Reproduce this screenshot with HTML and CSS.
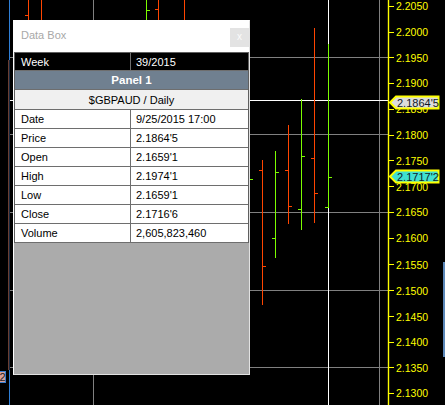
FILE: index.html
```html
<!DOCTYPE html>
<html>
<head>
<meta charset="utf-8">
<link rel="stylesheet" href="styles.css">
</head>
<body>
<div class="screen">
  <svg class="chart" width="445" height="405" viewBox="0 0 445 405">
    <g class="edges">
      <line x1="9.5" y1="0" x2="9.5" y2="60" stroke="#2f7fd6"/>
      <line x1="8.5" y1="60" x2="8.5" y2="370" stroke="#6a3e32"/>
      <line x1="9.5" y1="60" x2="9.5" y2="370" stroke="#1a2a40"/>
      <line x1="9.5" y1="370" x2="9.5" y2="405" stroke="#2f7fd6"/>
      <rect x="-30.5" y="371.5" width="36" height="11" fill="#d8a09a" stroke="#3a7fd0"/>
      <text x="5.5" y="381" class="lefttag" text-anchor="end">2</text>
      <rect x="443" y="262" width="2" height="95" fill="#5b87b8"/>
    </g>
    <g stroke="#808080" shape-rendering="crispEdges">
      <line x1="10" y1="57.5" x2="388" y2="57.5"/>
      <line x1="10" y1="134.5" x2="388" y2="134.5"/>
      <line x1="10" y1="212.5" x2="388" y2="212.5"/>
      <line x1="10" y1="290.5" x2="388" y2="290.5"/>
      <line x1="10" y1="367.5" x2="388" y2="367.5"/>
      <line x1="93.5" y1="0" x2="93.5" y2="405"/>
      <line x1="379.5" y1="0" x2="379.5" y2="405"/>
    </g>
    <g stroke="#ffffff" shape-rendering="crispEdges">
      <line x1="328.5" y1="0" x2="328.5" y2="405"/>
      <line x1="10" y1="100.5" x2="388" y2="100.5"/>
    </g>
    <g stroke="#ff4500" fill="none" shape-rendering="crispEdges">
      <path d="M28.5 0V20M25 15.5H28"/>
      <path d="M41.5 0V20"/>
      <path d="M158.5 0V20M155 9.5H158"/>
      <path d="M184.5 0V20"/>
      <path d="M262.5 160V305M259 170.5H262M263 266.5H266"/>
      <path d="M288.5 125V224M285 170.5H288M289 206.5H292"/>
      <path d="M314.5 28V223M311 158.5H314M315 193.5H318"/>
    </g>
    <g stroke="#7cfc00" fill="none" shape-rendering="crispEdges">
      <path d="M146.5 0V20M147 10.5H150"/>
      <path d="M249.5 150V230M250 179.5H253"/>
      <path d="M275.5 151V258M272 238.5H275M276 172.5H279"/>
      <path d="M301.5 99V230M298 209.5H301M302 156.5H305"/>
      <path d="M328.5 44V208M325 207.5H328M329 177.5H332"/>
    </g>
    <g class="axis">
      <line x1="388.5" y1="0" x2="388.5" y2="405" stroke="#ffff00" stroke-width="1.4"/>
      <g stroke="#ffff00" shape-rendering="crispEdges">
        <path d="M389 6.5H394M389 32.5H394M389 57.5H394M389 83.5H394M389 109.5H394M389 135.5H394M389 160.5H394M389 186.5H394M389 212.5H394M389 238.5H394M389 264.5H394M389 290.5H394M389 316.5H394M389 342.5H394M389 367.5H394M389 393.5H394"/>
      </g>
      <g class="ticklabels">
        <text x="396" y="10">2.2050</text>
        <text x="396" y="36">2.2000</text>
        <text x="396" y="61.5">2.1950</text>
        <text x="396" y="87">2.1900</text>
        <text x="396" y="113">2.1850</text>
        <text x="396" y="139">2.1800</text>
        <text x="396" y="164.5">2.1750</text>
        <text x="396" y="190.5">2.1700</text>
        <text x="396" y="216">2.1650</text>
        <text x="396" y="242">2.1600</text>
        <text x="396" y="268.5">2.1550</text>
        <text x="396" y="294.5">2.1500</text>
        <text x="396" y="320.5">2.1450</text>
        <text x="396" y="346">2.1400</text>
        <text x="396" y="371.5">2.1350</text>
        <text x="396" y="397">2.1300</text>
      </g>
    </g>
    <g class="markers">
      <polygon points="390,102.5 396,96.5 438.5,96.5 438.5,108.5 396,108.5" fill="#dcdcdc" stroke="#ffff00" stroke-width="2"/>
      <text x="397" y="106.5">2.1864'5</text>
      <polygon points="390,176.5 396,170.5 438.5,170.5 438.5,182.5 396,182.5" fill="#40e0d0" stroke="#ffff00" stroke-width="2"/>
      <text x="397" y="180.5">2.1717'2</text>
    </g>
  </svg>

  <div class="window">
    <div class="titlebar">
      <span class="title">Data Box</span>
      <span class="close">x</span>
    </div>
    <div class="grid">
      <div class="row week"><span class="k">Week</span><span class="v">39/2015</span></div>
      <div class="row panel">Panel 1</div>
      <div class="row symbol">$GBPAUD / Daily</div>
      <div class="row data"><span class="k">Date</span><span class="v">9/25/2015 17:00</span></div>
      <div class="row data"><span class="k">Price</span><span class="v">2.1864'5</span></div>
      <div class="row data"><span class="k">Open</span><span class="v">2.1659'1</span></div>
      <div class="row data"><span class="k">High</span><span class="v">2.1974'1</span></div>
      <div class="row data"><span class="k">Low</span><span class="v">2.1659'1</span></div>
      <div class="row data"><span class="k">Close</span><span class="v">2.1716'6</span></div>
      <div class="row data"><span class="k">Volume</span><span class="v">2,605,823,460</span></div>
    </div>
    <div class="fill"></div>
  </div>
</div>
</body>
</html>
```
FILE: styles.css
```css
html, body {
  margin: 0;
  padding: 0;
  background: #000;
}
.screen {
  position: relative;
  width: 445px;
  height: 405px;
  overflow: hidden;
  background: #000;
  font-family: "Liberation Sans", Arial, sans-serif;
}
.chart {
  display: block;
}
.ticklabels text {
  font-family: "Liberation Sans", Arial, sans-serif;
  font-size: 10.5px;
  fill: #ffff00;
}
.markers text {
  font-family: "Liberation Sans", Arial, sans-serif;
  font-size: 11px;
  fill: #101828;
}
.lefttag {
  font-family: "Liberation Sans", Arial, sans-serif;
  font-size: 11px;
  fill: #202020;
}
.window {
  position: absolute;
  left: 13px;
  top: 20px;
  width: 237px;
  height: 355px;
  box-sizing: border-box;
  border: 1px solid #e2e2e2;
  border-top-color: #ffffff;
  border-left-color: #ffffff;
  background: #ababab;
  display: flex;
  flex-direction: column;
  font-size: 11px;
}
.titlebar {
  flex: none;
  height: 31px;
  background: #fff;
  display: flex;
  justify-content: space-between;
  align-items: flex-start;
}
.title {
  margin-top: 5px;
  padding-left: 7px;
  line-height: 19px;
  color: #a8a8a8;
}
.close {
  margin-top: 7px;
  width: 19px;
  height: 19px;
  background: #e3e3e3;
  color: #fbfbfb;
  font-size: 10px;
  line-height: 17px;
  text-align: center;
}
.grid {
  flex: none;
  border: 1px solid #5f5f5f;
  border-bottom: none;
}
.row {
  display: flex;
  align-items: center;
  box-sizing: border-box;
  height: 19px;
  border-bottom: 1px solid #6e6e6e;
}
.week {
  height: 18px;
  background: #000;
  color: #fff;
}
.panel {
  background: #708090;
  color: #fff;
  font-weight: bold;
  justify-content: center;
  font-size: 11.5px;
}
.symbol {
  height: 20px;
  background: #f0f0f0;
  color: #000;
  justify-content: center;
}
.data {
  background: #fff;
  color: #000;
}
.k {
  flex: none;
  width: 116px;
  height: 100%;
  box-sizing: border-box;
  padding-left: 6px;
  border-right: 1px solid #6e6e6e;
  display: flex;
  align-items: center;
}
.v {
  flex: 1;
  padding-left: 5px;
}
.fill {
  flex: 1;
}
```
